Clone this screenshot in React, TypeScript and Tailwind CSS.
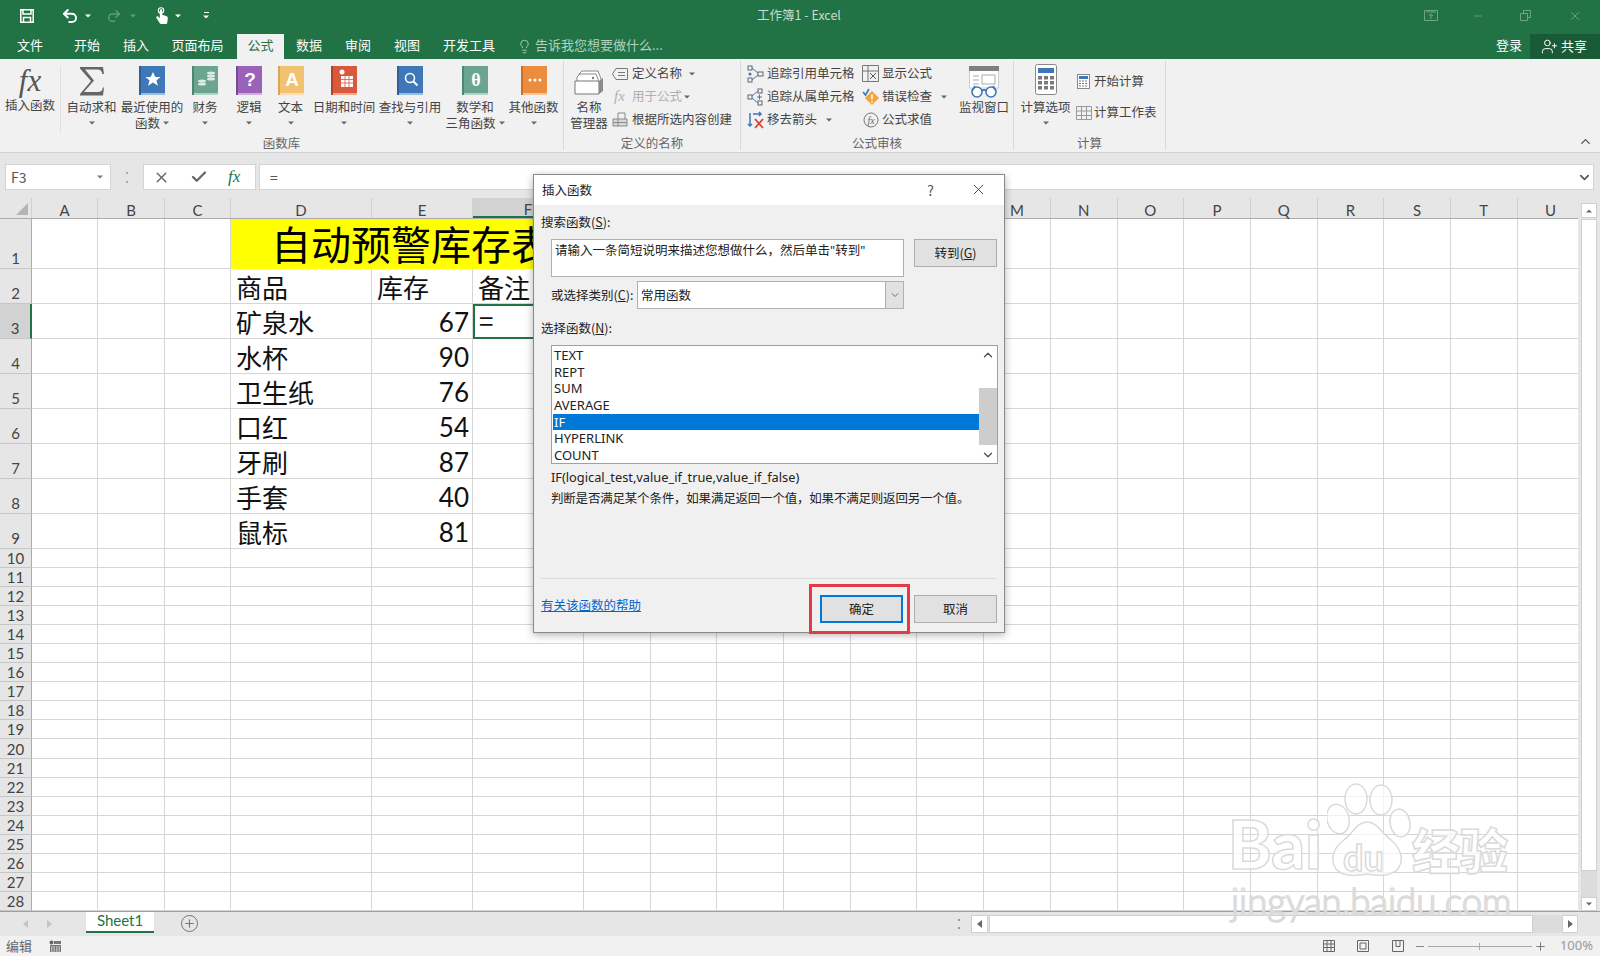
import React from 'react';
import { Check, ChevronDown, ChevronUp, Lightbulb, Minus, Plus, Redo2, Undo2, UserPlus, X } from 'lucide-react';

const GRID = 'grid grid-rows-[minmax(0,1fr)] grid-cols-[32px_66px_67px_66px_141px_101px_111px_repeat(15,66.7px)]';
const COLS = ['A', 'B', 'C', 'D', 'E', 'F', 'G', 'H', 'I', 'J', 'K', 'L', 'M', 'N', 'O', 'P', 'Q', 'R', 'S', 'T', 'U'];
const DATA: Record<number, [string, string]> = {
  2: ['商品', '库存'],
  3: ['矿泉水', '67'],
  4: ['水杯', '90'],
  5: ['卫生纸', '76'],
  6: ['口红', '54'],
  7: ['牙刷', '87'],
  8: ['手套', '40'],
  9: ['鼠标', '81'],
};
const FUNCS = ['TEXT', 'REPT', 'SUM', 'AVERAGE', 'IF', 'HYPERLINK', 'COUNT'];

function Caret({ className = 'fill-[#666]' }: { className?: string }) {
  return (
    <svg width="6" height="4" viewBox="0 0 6 4" className={className}>
      <path d="M0 0.5h6L3 3.5z" />
    </svg>
  );
}

function Book({ color, dark, light, children }: { color: string; dark: string; light: string; children?: React.ReactNode }) {
  return (
    <svg width="26" height="30" viewBox="0 0 26 30">
      <rect x="2" y="0" width="24" height="27" fill={color} />
      <rect x="0" y="0" width="2" height="29" fill={dark} />
      <rect x="2" y="27" width="24" height="2" fill={light} />
      {children}
    </svg>
  );
}

function RibbonButton({ w, icon, lines, caret }: { w: string; icon: React.ReactNode; lines: string[]; caret?: 'below' | 'inline' }) {
  return (
    <div className={`${w} flex flex-col items-center shrink-0`}>
      <div className="h-[33px] flex items-start justify-center">{icon}</div>
      {lines.map((l, i) => (
        <div key={i} className="h-[16px] leading-[14px] whitespace-nowrap flex items-center gap-[3px]">
          {l}
          {caret === 'inline' && i === lines.length - 1 && <Caret />}
        </div>
      ))}
      {caret === 'below' && (
        <div className="h-[16px] flex items-center">
          <Caret />
        </div>
      )}
    </div>
  );
}

function Group({ w, label, children }: { w: string; label: string; children: React.ReactNode }) {
  return (
    <div className={`${w} shrink-0 h-[89px] mt-[2px] border-r border-[#d9d9d9] flex flex-col`}>
      <div className="h-[75px] flex">{children}</div>
      <div className="h-[14px] leading-[14px] text-center text-[#666] mt-[1px]">{label}</div>
    </div>
  );
}

function SmallRow({
  icon,
  text,
  caret,
  muted,
  w = 'w-[17px]',
  gap = 'ml-[2px]',
}: {
  icon: React.ReactNode;
  text: string;
  caret?: string;
  muted?: boolean;
  w?: string;
  gap?: string;
}) {
  return (
    <div className={`h-[23px] flex items-center whitespace-nowrap ${muted ? 'text-[#b0b0b0]' : ''}`}>
      <span className={`${w} flex justify-center shrink-0`}>{icon}</span>
      <span className={gap}>{text}</span>
      {caret && (
        <span className={caret}>
          <Caret />
        </span>
      )}
    </div>
  );
}

function Ribbon() {
  return (
    <div className="h-[94px] bg-[#f1f1f1] border-b border-[#d2d2d2] flex text-[12.5px] text-[#444] relative">
      <Group w="w-[564px]" label="函数库">
        <div className="w-[61px] shrink-0 h-[66px] mt-[5px] border-r border-[#e0e0e0] flex flex-col items-center">
          <div className="h-[33px] [font-family:'Liberation_Serif',serif] italic text-[31px] leading-[30px] text-[#555]">fx</div>
          <div className="h-[16px] leading-[14px] mt-[-1px]">插入函数</div>
        </div>
        <div className="flex pt-[5px]">
          <RibbonButton
            w="w-[61px]"
            caret="below"
            lines={['自动求和']}
            icon={
              <svg width="26" height="30" viewBox="0 0 26 30" className="fill-[#666]">
                <path d="M1 1h23l1 7h-1.5c-.6-3-2-4.500-5-4.500H6l9 11-10 11.500h14c3 0 4.300-1.500 5-4.500h1l-1 8H1v-1.500l11-13L1 2.500z" />
              </svg>
            }
          />
          <RibbonButton
            w="w-[60px]"
            caret="inline"
            lines={['最近使用的', '函数']}
            icon={
              <Book color="#3e78b8" dark="#2f5f96" light="#9dbbdc">
                <path d="M14 6l2.300 5h5.200l-4.100 3.400 1.600 5.300-5-3.100-5 3.100 1.600-5.300-4.100-3.400h5.200z" fill="#fff" />
              </Book>
            }
          />
          <RibbonButton
            w="w-[46px]"
            caret="below"
            lines={['财务']}
            icon={
              <Book color="#6ba58f" dark="#4d8672" light="#b5d2c6">
                <ellipse cx="19" cy="7" rx="4" ry="1.500" fill="#dcebe5" />
                <ellipse cx="19" cy="10" rx="4" ry="1.500" fill="#dcebe5" />
                <ellipse cx="19" cy="13" rx="4" ry="1.500" fill="#dcebe5" />
                <ellipse cx="10" cy="15" rx="4" ry="1.500" fill="#dcebe5" />
                <ellipse cx="10" cy="18" rx="4" ry="1.500" fill="#dcebe5" />
              </Book>
            }
          />
          <RibbonButton
            w="w-[42px]"
            caret="below"
            lines={['逻辑']}
            icon={
              <Book color="#9a62b8" dark="#7a4898" light="#ccb0dc">
                <text x="14" y="20" textAnchor="middle" fontSize="19" fontWeight="700" fill="#fff" fontFamily="Liberation Sans">?</text>
              </Book>
            }
          />
          <RibbonButton
            w="w-[41px]"
            caret="below"
            lines={['文本']}
            icon={
              <Book color="#f0c272" dark="#d8a652" light="#f8e0b6">
                <text x="14" y="20" textAnchor="middle" fontSize="19" fontWeight="700" fill="#fff" fontFamily="Liberation Sans">A</text>
              </Book>
            }
          />
          <RibbonButton
            w="w-[66px]"
            caret="below"
            lines={['日期和时间']}
            icon={
              <Book color="#d9593a" dark="#b0432a" light="#eeab9a">
                <circle cx="11" cy="6" r="2.500" fill="#fff" />
                <rect x="10" y="10" width="12" height="11" fill="#fff" />
                <path d="M10 13.500h12M10 17h12M14 10v11M18 10v11" stroke="#d9593a" strokeWidth="0.800" />
              </Book>
            }
          />
          <RibbonButton
            w="w-[66px]"
            caret="below"
            lines={['查找与引用']}
            icon={
              <Book color="#3e78b8" dark="#2f5f96" light="#9dbbdc">
                <circle cx="13" cy="12" r="4.500" fill="none" stroke="#fff" strokeWidth="1.600" />
                <path d="M16.500 15.500l4 4" stroke="#fff" strokeWidth="2" />
              </Book>
            }
          />
          <RibbonButton
            w="w-[64px]"
            caret="inline"
            lines={['数学和', '三角函数']}
            icon={
              <Book color="#6ba58f" dark="#4d8672" light="#b5d2c6">
                <text x="14" y="20" textAnchor="middle" fontSize="18" fontWeight="700" fill="#fff" fontFamily="Liberation Serif">θ</text>
              </Book>
            }
          />
          <RibbonButton
            w="w-[53px]"
            caret="below"
            lines={['其他函数']}
            icon={
              <Book color="#ec8c3e" dark="#c86f28" light="#f6c69e">
                <circle cx="9" cy="14" r="1.500" fill="#fff" />
                <circle cx="14" cy="14" r="1.500" fill="#fff" />
                <circle cx="19" cy="14" r="1.500" fill="#fff" />
              </Book>
            }
          />
        </div>
      </Group>

      <Group w="w-[177px]" label="定义的名称">
        <div className="pt-[5px]">
          <RibbonButton
            w="w-[50px]"
            lines={['名称', '管理器']}
            icon={
              <svg width="32" height="30" viewBox="0 0 32 30" className="mt-[2px]">
                <path d="M6 6l3-3h16l3 8v8H6z" fill="#fff" stroke="#8a8a8a" />
                <path d="M4 9l3-3h16l3 8v5H4z" fill="#fff" stroke="#8a8a8a" />
                <path d="M2 13h24v13H2z" fill="#fff" stroke="#777" />
                <path d="M26 13l4-3v13l-4 3z" fill="#8a8a8a" />
                <circle cx="20" cy="10" r="1.200" fill="#777" />
              </svg>
            }
          />
        </div>
        <div className="pt-[1px] ml-[-3px]">
          <SmallRow
            text="定义名称"
            gap="ml-[4px]"
            caret="ml-[7px]"
            icon={
              <svg width="16" height="12" viewBox="0 0 16 12" fill="none" stroke="#777">
                <path d="M4 .5h11.500v11H4L.5 6z" />
                <path d="M6 4.500h7M6 7.500h7" />
              </svg>
            }
          />
          <SmallRow
            text="用于公式"
            muted
            gap="ml-[4px]"
            caret="ml-[2px]"
            icon={<span className="[font-family:'Liberation_Serif',serif] italic text-[15px]">fx</span>}
          />
          <SmallRow
            text="根据所选内容创建"
            gap="ml-[4px]"
            icon={
              <svg width="16" height="15" viewBox="0 0 16 15" fill="none" stroke="#888">
                <path d="M1 7h14v7H1z" fill="#d8d8d8" />
                <path d="M6 7V1h7v6M1 10.500h14M6 7v7" />
              </svg>
            }
          />
        </div>
      </Group>

      <Group w="w-[273px]" label="公式审核">
        <div className="flex pl-[5px] pt-[1px]">
          <div className="w-[117px]">
            <SmallRow
              text="追踪引用单元格"
              w="w-[19px]"
              icon={
                <svg width="17" height="18" viewBox="0 0 17 18" fill="none" stroke="#666">
                  <rect x="1" y="1" width="4" height="4" />
                  <rect x="1" y="13" width="4" height="4" />
                  <rect x="11" y="7" width="5" height="4" />
                  <path d="M5 3l6 5M5 15l6-5" stroke="#3e78b8" />
                  <circle cx="3" cy="9" r="1.500" fill="#3e78b8" stroke="none" />
                </svg>
              }
            />
            <SmallRow
              text="追踪从属单元格"
              w="w-[19px]"
              icon={
                <svg width="17" height="18" viewBox="0 0 17 18" fill="none" stroke="#666">
                  <rect x="1" y="7" width="4" height="4" />
                  <rect x="11" y="1" width="4" height="4" />
                  <rect x="11" y="13" width="4" height="4" />
                  <path d="M5 8l6-5M5 10l6 5" stroke="#3e78b8" />
                  <path d="M10 9h5M12.500 6.500v5" stroke="#3e78b8" />
                </svg>
              }
            />
            <SmallRow
              text="移去箭头"
              w="w-[19px]"
              caret="ml-[9px]"
              icon={
                <svg width="17" height="18" viewBox="0 0 17 18" fill="none" strokeWidth="1.500">
                  <path d="M3 2v13M1 13l2 2 2-2M6 3h8M12 1l2 2-2 2" stroke="#3e78b8" />
                  <path d="M8 8l8 9M16 8l-8 9" stroke="#d9412b" strokeWidth="1.800" />
                </svg>
              }
            />
          </div>
          <div className="w-[99px] ml-[-2px]">
            <SmallRow
              text="显示公式"
              w="w-[19px]"
              icon={
                <svg width="17" height="17" viewBox="0 0 17 17" fill="none" stroke="#777">
                  <path d="M.5.500h16v16H.5zM.5 6h16M6 .5v16" />
                  <path d="M8 8l6 6M14 8l-6 6" stroke="#555" />
                </svg>
              }
            />
            <SmallRow
              text="错误检查"
              w="w-[19px]"
              caret="ml-[9px]"
              icon={
                <svg width="18" height="17" viewBox="0 0 18 17">
                  <path d="M10 3l7 7-7 7-7-7z" fill="#f0a43a" />
                  <path d="M10 6.500v5M10 13v1.500" stroke="#fff" strokeWidth="1.500" />
                  <path d="M1 4l2.500 3L7 1" fill="none" stroke="#3e78b8" strokeWidth="1.600" />
                </svg>
              }
            />
            <SmallRow
              text="公式求值"
              w="w-[19px]"
              icon={
                <svg width="16" height="16" viewBox="0 0 16 16">
                  <circle cx="8" cy="8" r="7" fill="none" stroke="#777" />
                  <text x="8" y="11.500" textAnchor="middle" fontSize="10" fontStyle="italic" fill="#666" fontFamily="Liberation Serif">fx</text>
                </svg>
              }
            />
          </div>
        </div>
        <div className="pt-[5px] ml-[-4px]">
          <RibbonButton
            w="w-[56px]"
            lines={['监视窗口']}
            icon={
              <svg width="30" height="33" viewBox="0 0 30 33">
                <rect x="0.500" y="1" width="29" height="21" fill="#fff" stroke="#ccc" />
                <rect x="0" y="0" width="30" height="5" fill="#7f7f7f" />
                <rect x="13" y="9" width="13" height="9" fill="#fff" stroke="#aaa" />
                <path d="M4 10h6M4 14h6M4 18h6" stroke="#aaa" />
                <circle cx="8" cy="26" r="5" fill="#fff" stroke="#3e78b8" strokeWidth="1.600" />
                <circle cx="22" cy="26" r="5" fill="#fff" stroke="#3e78b8" strokeWidth="1.600" />
                <path d="M13 25c1-1.500 3-1.500 4 0M3 25l3-5M27 25l-3-5" stroke="#3e78b8" strokeWidth="1.600" fill="none" />
              </svg>
            }
          />
        </div>
      </Group>

      <Group w="w-[152px]" label="计算">
        <div className="pt-[5px] pl-[1px]">
          <RibbonButton
            w="w-[61px]"
            caret="below"
            lines={['计算选项']}
            icon={
              <svg width="22" height="31" viewBox="0 0 22 31" className="mt-[-2px]">
                <rect x="0.500" y="0.500" width="21" height="30" rx="2" fill="#fff" stroke="#888" />
                <rect x="3" y="4" width="16" height="5" fill="#3e78b8" />
                {[12, 17, 22].map((y) =>
                  [3, 9, 15].map((x) => <rect key={`${x}-${y}`} x={x} y={y} width="4" height="3.500" fill="#7a7a7a" />),
                )}
              </svg>
            }
          />
        </div>
        <div className="pt-[9px] ml-[-1px] flex flex-col gap-[8px]">
          <SmallRow
            text="开始计算"
            icon={
              <svg width="13" height="15" viewBox="0 0 13 15">
                <rect x="0.500" y="0.500" width="12" height="14" fill="#fff" stroke="#888" />
                <rect x="2" y="2" width="9" height="3" fill="#3e78b8" />
                <path d="M2 7h9M2 9.500h9M2 12h9" stroke="#777" strokeWidth="1.200" strokeDasharray="2 1" />
              </svg>
            }
          />
          <SmallRow
            text="计算工作表"
            icon={
              <svg width="16" height="14" viewBox="0 0 16 14" fill="none" stroke="#999">
                <path d="M.5.500h15v13H.5zM.5 5h15M.5 9.500h15M5.500.500v13M10.500.500v13" />
              </svg>
            }
          />
        </div>
      </Group>

      <ChevronUp className="absolute right-[7px] bottom-[3px] w-[15px] h-[15px] text-[#555]" strokeWidth={2.2} />
    </div>
  );
}

function TitleBar() {
  return (
    <div className="h-[59px] bg-[#217346] text-white shrink-0">
      <div className="h-[34px] pb-[3px] relative flex items-center">
        <div className="flex items-center pl-[20px]">
          <svg width="14" height="14" viewBox="0 0 14 14" fill="none" stroke="#fff" strokeWidth="1.500">
            <path d="M.8.800h12.400v12.400H.8zM3 1v4h8V1M3.500 13V8.500h7V13" />
          </svg>
          <Undo2 className="w-[18px] h-[18px] ml-[27px]" strokeWidth={2.6} />
          <Caret className="fill-white ml-[6px]" />
          <Redo2 className="w-[16px] h-[16px] ml-[15px] text-[#5f9c7c]" strokeWidth={2.2} />
          <Caret className="fill-[#5f9c7c] ml-[8px]" />
          {/* touch mode hand */}
          <svg width="14" height="18" viewBox="0 0 14 18" className="ml-[19px]">
            <circle cx="6" cy="3.500" r="2.700" fill="none" stroke="#fff" strokeWidth="1.100" />
            <path d="M4.800 3.500c0-1.600 2.400-1.600 2.400 0v4.300l4 1.200c1.300.4 1.800 1.300 1.600 2.500l-.6 4.500c-.1.600-.5 1-1.100 1H6c-.5 0-.9-.2-1.200-.7L1.500 11c-.7-1.200.7-2.300 1.700-1.300l1.600 1.500z" fill="#fff" />
          </svg>
          <Caret className="fill-white ml-[6px]" />
          <span className="ml-[22px] flex flex-col items-center gap-[2px]">
            <span className="w-[5px] h-px bg-white" />
            <Caret className="fill-white" />
          </span>
        </div>
        <div className="absolute left-[741px] w-[116px] text-center text-[12.5px] text-[#c9dcd1]">工作簿1 - Excel</div>
        <div className="ml-auto flex items-center text-[#6fa587]">
          <svg width="14" height="11" viewBox="0 0 14 11" fill="none" stroke="currentColor" className="mr-[34px]">
            <path d="M.5.500h13v10H.5zM2 2h10M7 9V4M5 6l2-2 2 2" />
          </svg>
          <Minus className="w-[12px] h-[12px] mr-[36px]" strokeWidth={1.6} />
          <svg width="11" height="11" viewBox="0 0 11 11" fill="none" stroke="currentColor" className="mr-[37px]">
            <path d="M.5 3.500h7v7h-7zM3.500 3V.5h7v7H8" />
          </svg>
          <X className="w-[14px] h-[14px] mr-[18px]" strokeWidth={1.6} />
        </div>
      </div>
      <div className="h-[25px] flex items-stretch text-[13px] leading-[21px] text-center">
        <div className="w-[60px]">文件</div>
        <div className="w-[54px]">开始</div>
        <div className="w-[44px]">插入</div>
        <div className="w-[79px]">页面布局</div>
        <div className="w-[47px] bg-[#f1f1f1] text-[#217346]">公式</div>
        <div className="w-[50px]">数据</div>
        <div className="w-[48px]">审阅</div>
        <div className="w-[50px]">视图</div>
        <div className="w-[74px]">开发工具</div>
        <div className="ml-[11px] flex items-center gap-[3px] pb-[4px] text-[#b3d0bf]">
          <Lightbulb className="w-[15px] h-[15px] mt-[3px]" strokeWidth={1.4} />
          告诉我您想要做什么...
        </div>
        <div className="ml-auto mr-[8px]">登录</div>
        <div className="w-[70px] bg-[#195a37] flex items-center justify-center gap-[3px] pr-[2px] pb-[3px]">
          <UserPlus className="w-[17px] h-[17px] mt-[3px]" strokeWidth={1.4} />
          共享
        </div>
      </div>
    </div>
  );
}

function FormulaBar() {
  return (
    <div className="h-[45px] bg-[#e6e6e6] shrink-0 flex items-start pt-[11px] text-[14px] text-[#555]">
      <div className="ml-[5px] w-[106px] h-[26px] bg-white border border-[#d4d4d4] flex items-center px-[5px]">
        F3
        <Caret className="fill-[#777] ml-auto mr-[2px]" />
      </div>
      <div className="w-[32px] h-[26px] flex items-center justify-center">
        <span className="w-[2px] h-[11px] border-y-2 border-[#aaa]" />
      </div>
      <div className="w-[113px] h-[26px] bg-white border border-[#d4d4d4] flex items-center">
        <X className="w-[17px] h-[17px] ml-[9px] text-[#666]" strokeWidth={2} />
        <Check className="w-[18px] h-[18px] ml-[20px] text-[#666]" strokeWidth={3} />
        <span className="ml-[20px] [font-family:'Liberation_Serif',serif] italic text-[17px] text-[#217346]">fx</span>
      </div>
      <div className="ml-[3px] flex-1 mr-[6px] h-[26px] bg-white border border-[#d4d4d4] flex items-center pl-[10px]">
        =
        <ChevronDown className="w-[15px] h-[15px] ml-auto mr-[1px] text-[#555]" strokeWidth={2.6} />
      </div>
    </div>
  );
}

function Sheet() {
  const rows = Array.from({ length: 28 }, (_, i) => i + 1);
  return (
    <div className="flex h-[713px] shrink-0">
      <div className="w-[1578px] overflow-hidden">
        <div className={`${GRID} h-[21px] bg-[#e6e6e6] border-b border-[#ababab] text-[15px] leading-[18px] text-[#444] [font-family:'Lato',sans-serif]`}>
          <div className="border-r border-[#d0d0d0] flex items-end justify-end pr-[3px] pb-[3px]">
            <span className="w-0 h-0 border-l-[12px] border-t-[12px] border-l-transparent border-t-transparent border-b-0 border-r-[12px] border-r-[#b4b4b4]" />
          </div>
          {COLS.map((c) => (
            <div
              key={c}
              className={`flex items-center justify-center pt-[3px] border-r border-[#d0d0d0] ${c === 'F' ? 'bg-[#d2d2d2] border-b-2 border-b-[#217346]' : ''}`}
            >
              {c}
            </div>
          ))}
        </div>
        {rows.map((r) => (
          <div key={r} className={`${GRID} ${r === 1 ? 'h-[50px]' : r <= 9 ? 'h-[35px]' : 'h-[19.050px]'}`}>
            <div
              className={`flex items-end justify-center [font-family:'Lato',sans-serif] text-[15px] text-[#444] border-b border-[#c6c6c6] ${
                r <= 9 ? 'leading-[19px]' : 'leading-[17px]'
              } ${r === 3 ? 'bg-[#d2d2d2] border-r-2 border-r-[#217346]' : 'bg-[#e6e6e6] border-r border-r-[#ababab]'}`}
            >
              {r}
            </div>
            {r === 1 ? (
              <>
                <div className="border-r border-b border-[#d6d6d6]" />
                <div className="border-r border-b border-[#d6d6d6]" />
                <div className="border-r border-b border-[#d6d6d6]" />
                <div className="col-span-3 bg-[#ffff00] text-[40px] leading-[49px] text-black pl-[40px] whitespace-nowrap overflow-hidden">
                  自动预警库存表
                </div>
                {COLS.slice(6).map((c) => (
                  <div key={c} className="border-r border-b border-[#d6d6d6]" />
                ))}
              </>
            ) : (
              COLS.map((c) => (
                <div
                  key={c}
                  className={`text-[26px] text-[#111] ${
                    c === 'F' && r === 3 ? 'border-2 border-[#217346] pl-[4px] leading-[28px]' : 'border-r border-b border-[#d6d6d6] leading-[36px]'
                  } ${c === 'E' && r > 2 ? "text-right pr-[3px] [font-family:'Lato',sans-serif]" : c === 'F' && r === 3 ? '' : 'pl-[5px]'}`}
                >
                  {DATA[r] && c === 'D' && DATA[r][0]}
                  {DATA[r] && c === 'E' && DATA[r][1]}
                  {c === 'F' && r === 2 && '备注'}
                  {c === 'F' && r === 3 && '='}
                </div>
              ))
            )}
          </div>
        ))}
      </div>
      <div className="w-[22px] bg-[#e6e6e6] flex flex-col items-center pt-[5px]">
        <div className="w-[16px] h-[15px] bg-white border border-[#d0d0d0] flex items-center justify-center">
          <Caret className="fill-[#666] rotate-180" />
        </div>
        <div className="w-[16px] h-[652px] bg-white border border-[#d0d0d0] mt-[1px]" />
        <div className="w-[16px] h-[26px] bg-[#dcdcdc]" />
        <div className="w-[16px] h-[14px] bg-white border border-[#d0d0d0] flex items-center justify-center">
          <Caret className="fill-[#666]" />
        </div>
      </div>
    </div>
  );
}

function SheetTabs() {
  return (
    <div className="h-[25px] shrink-0 bg-[#e6e6e6] border-t border-[#9f9f9f] flex items-start relative">
      <div className="w-[86px] h-[24px] flex items-center pl-[23px] gap-[19px] text-[#c4c4c4]">
        <span className="w-0 h-0 border-y-[4px] border-r-[5px] border-y-transparent border-r-[#c4c4c4]" />
        <span className="w-0 h-0 border-y-[4px] border-l-[5px] border-y-transparent border-l-[#c4c4c4]" />
      </div>
      <div className="w-[68px] h-[21px] bg-white border-b-2 border-[#217346] text-center text-[15px] leading-[17px] text-[#217346] [font-family:'Lato',sans-serif]">
        Sheet1
      </div>
      <div className="ml-[27px] mt-[3px] w-[17px] h-[17px] rounded-full border-[1.5px] border-[#777] flex items-center justify-center">
        <Plus className="w-[13px] h-[13px] text-[#777]" strokeWidth={2} />
      </div>
      <div className="absolute left-[958px] top-[7px] w-[2px] h-[10px] border-y-2 border-[#999]" />
      <div className="absolute left-[971px] right-[22px] top-[3px] h-[18px] flex">
        <div className="w-[17px] bg-white border border-[#d0d0d0] flex items-center justify-center">
          <span className="w-0 h-0 border-y-[4px] border-r-[5px] border-y-transparent border-r-[#666]" />
        </div>
        <div className="w-[544px] bg-white border border-[#d0d0d0] ml-[1px]" />
        <div className="flex-1 bg-[#dcdcdc]" />
        <div className="w-[16px] bg-white border border-[#d0d0d0] flex items-center justify-center">
          <span className="w-0 h-0 border-y-[4px] border-l-[5px] border-y-transparent border-l-[#666]" />
        </div>
      </div>
    </div>
  );
}

function StatusBar() {
  return (
    <div className="h-[20px] shrink-0 bg-[#f1f1f1] flex items-center text-[13px] text-[#666]">
      <span className="ml-[6px]">编辑</span>
      <svg width="13" height="13" viewBox="0 0 13 13" className="ml-[17px]">
        <circle cx="2.500" cy="2.500" r="2" fill="#666" />
        <path d="M5 1h7v3H5zM1 5h11v7H1z" fill="#777" />
        <path d="M2 7h9M2 9h9M2 11h9" stroke="#f1f1f1" strokeDasharray="1.500 1" />
      </svg>
      <svg width="14" height="14" viewBox="0 0 14 14" fill="none" stroke="#666" className="ml-[1260px]">
        <path d="M1.500 1.500h11v11h-11zM1.500 5h11M1.500 8.500h11M5 1.500v11M9 1.500v11" />
      </svg>
      <svg width="14" height="14" viewBox="0 0 14 14" fill="none" stroke="#666" className="ml-[20px]">
        <path d="M1.500 1.500h11v11h-11zM4 4h6v6H4z" />
      </svg>
      <svg width="14" height="14" viewBox="0 0 14 14" fill="none" stroke="#666" className="ml-[21px]">
        <path d="M1.500 1.500h11v11h-11zM5 1.500v6h4v-6" />
      </svg>
      <span className="ml-[11px] w-[8px] h-px bg-[#888]" />
      <div className="ml-[4px] w-[104px] h-px bg-[#aaa] relative">
        <span className="absolute left-[51px] top-[-3px] w-px h-[7px] bg-[#aaa]" />
      </div>
      <Plus className="w-[13px] h-[13px] ml-[2px] text-[#777]" strokeWidth={1.8} />
      <span className="ml-auto mr-[7px] text-[#999] [font-family:'Noto_Sans',sans-serif]">100%</span>
    </div>
  );
}

function DialogButton({ children, primary }: { children: React.ReactNode; primary?: boolean }) {
  return (
    <div
      className={`w-[83px] h-[28px] bg-[#e1e1e1] flex items-center justify-center ${
        primary ? 'border-2 border-[#0078d7]' : 'border border-[#adadad]'
      }`}
    >
      {children}
    </div>
  );
}

function Dialog() {
  return (
    <div className="absolute left-[533px] top-[174px] w-[472px] h-[459px] border border-[#8a8a8a] bg-[#f0f0f0] shadow-[0_2px_8px_rgba(0,0,0,0.3)] text-[12.5px] leading-[14px] text-[#222] flex flex-col">
      <div className="h-[30px] bg-white shrink-0 flex items-center pl-[8px] pb-[1px]">
        插入函数
        <span className="ml-auto text-[14px] text-[#555]">?</span>
        <X className="w-[17px] h-[17px] ml-[36px] mr-[17px] text-[#333]" strokeWidth={1.2} />
      </div>
      <div className="pl-[7px] mt-[10px] h-[16px]">
        搜索函数(<span className="underline">S</span>):
      </div>
      <div className="flex items-start pl-[17px] mt-[8px]">
        <div className="w-[353px] h-[38px] bg-white border border-[#b0b0b0] px-[3px] py-[3px] whitespace-nowrap">
          请输入一条简短说明来描述您想做什么，然后单击<span className="[font-family:'Noto_Sans',sans-serif]">"</span>转到<span className="[font-family:'Noto_Sans',sans-serif]">"</span>
        </div>
        <div className="ml-[10px]">
          <DialogButton>
            转到(<span className="underline">G</span>)
          </DialogButton>
        </div>
      </div>
      <div className="flex items-center pl-[17px] mt-[4px]">
        <div className="w-[86px] whitespace-nowrap">
          或选择类别(<span className="underline">C</span>):
        </div>
        <div className="w-[267px] h-[28px] bg-white border border-[#b0b0b0] flex items-center pl-[3px]">
          常用函数
          <div className="ml-auto w-[18px] h-full bg-[#e1e1e1] border-l border-[#adadad] flex items-center justify-center">
            <ChevronDown className="w-[12px] h-[12px] text-[#555]" strokeWidth={1.6} />
          </div>
        </div>
      </div>
      <div className="pl-[7px] mt-[12px] h-[16px]">
        选择函数(<span className="underline">N</span>):
      </div>
      <div className="ml-[17px] mt-[8px] w-[447px] h-[119px] bg-white border border-[#a0a0a0] flex shrink-0 pl-[1px] pt-px">
        <div className="flex-1 [font-family:'Noto_Sans',sans-serif] text-[13px]">
          {FUNCS.map((f) => (
            <div key={f} className={`h-[16.700px] leading-[16px] pl-[1px] ${f === 'IF' ? 'bg-[#0078d7] text-white' : ''}`}>
              {f}
            </div>
          ))}
        </div>
        <div className="w-[18px] flex flex-col items-center">
          <ChevronUp className="w-[14px] h-[14px] mt-[1px] text-[#555] shrink-0" strokeWidth={2.4} />
          <div className="w-full h-[57px] bg-[#cdcdcd] mt-[26px] shrink-0" />
          <ChevronDown className="w-[14px] h-[14px] mt-[3px] text-[#555] shrink-0" strokeWidth={2.4} />
        </div>
      </div>
      <div className="pl-[17px] mt-[6px] h-[16px] [font-family:'Noto_Sans',sans-serif] text-[12.8px]">IF(logical_test,value_if_true,value_if_false)</div>
      <div className="pl-[17px] mt-[5px] h-[16px] tracking-[-0.2px]">判断是否满足某个条件，如果满足返回一个值，如果不满足则返回另一个值。</div>
      <div className="ml-[7px] mr-[7px] mt-[71px] h-px bg-[#dcdcdc]" />
      <div className="flex items-start pl-[7px] mt-[16px]">
        <span className="text-[#0066cc] underline mt-[3px]">有关该函数的帮助</span>
        <div className="ml-auto mr-[7px] flex gap-[11px]">
          <DialogButton primary>确定</DialogButton>
          <DialogButton>取消</DialogButton>
        </div>
      </div>
    </div>
  );
}

function Watermark() {
  const stroke = "text-white/70 [-webkit-text-stroke:1.5px_#dadada] [font-family:'Lato',sans-serif] absolute whitespace-nowrap";
  return (
    <div className="absolute left-0 top-0 w-[1600px] h-[956px] pointer-events-none">
      <div className={`${stroke} left-[1228px] top-[806px] text-[66px] leading-[76px] font-black`}>Bai</div>
      <svg width="90" height="95" viewBox="0 0 90 95" className="absolute left-[1327px] top-[783px]" fill="#ffffffb0" stroke="#dadada" strokeWidth="1.500">
        <ellipse cx="29" cy="16" rx="11" ry="15" />
        <ellipse cx="54" cy="17" rx="11" ry="15" />
        <ellipse cx="11" cy="36" rx="11" ry="15" transform="rotate(-15 11 36)" />
        <ellipse cx="73" cy="40" rx="10" ry="14" transform="rotate(-10 73 40)" />
        <path d="M40 39c-10 0-14 11-23 18C7 64 2 76 9 86c7 8 19 7 31 5 11 2 24 3 31-5 7-10 2-21-7-29-10-7-13-18-24-18z" />
      </svg>
      <div className={`${stroke} left-[1343px] top-[838px] text-[36px] leading-[38px] font-bold`}>du</div>
      <div className={`${stroke} left-[1412px] top-[820px] text-[48px] leading-[56px] font-black [font-family:'Noto_Sans_CJK_SC',sans-serif]`}>经验</div>
      <div className={`${stroke} left-[1231px] top-[878px] text-[36.500px] leading-[46px] font-light`}>jingyan.baidu.com</div>
    </div>
  );
}

export default function App() {
  return (
    <div className="relative w-[1600px] h-[956px] overflow-hidden bg-white flex flex-col [font-family:'Noto_Sans_CJK_SC','Noto_Sans',sans-serif]">
      <TitleBar />
      <Ribbon />
      <FormulaBar />
      <Sheet />
      <SheetTabs />
      <StatusBar />
      <Dialog />
      {/* red highlight around the OK button */}
      <div className="absolute left-[809px] top-[584px] w-[101px] h-[50px] border-[3px] border-[#e23b47]" />
      <Watermark />
    </div>
  );
}
